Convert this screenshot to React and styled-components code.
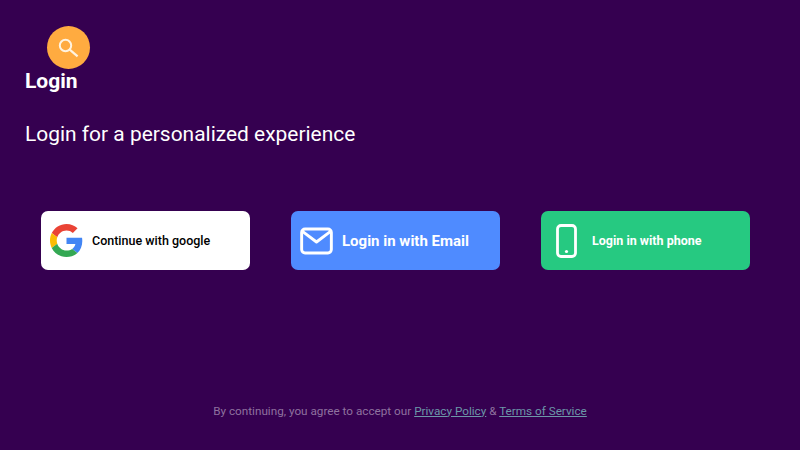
import React from "react";
import styled, { createGlobalStyle } from "styled-components";

const Global = createGlobalStyle`
  html, body { margin: 0; padding: 0; background: #350050; }
  body { font-family: Roboto, "Liberation Sans", sans-serif; }
  #root { width: 800px; height: 450px; overflow: hidden; }
`;

const Page = styled.main`
  width: 800px;
  height: 450px;
  box-sizing: border-box;
  background: #350050;
  color: #fff;
  display: flex;
  flex-direction: column;
  padding: 26px 0 0 0;
`;

const Header = styled.header`
  display: flex;
  flex-direction: column;
  align-items: flex-start;
  padding-left: 25px;
`;

const SearchBadge = styled.div`
  width: 43px;
  height: 43px;
  margin-left: 22px;
  border-radius: 50%;
  background: #ffab40;
  display: flex;
  align-items: center;
  justify-content: center;
`;

const Title = styled.h1`
  margin: 0;
  font-size: 21px;
  line-height: 24px;
  font-weight: 700;
  color: #fff;
`;

const Subtitle = styled.p`
  margin: 28px 0 0;
  font-size: 20.94px;
  line-height: 26px;
  font-weight: 400;
  color: #fff;
`;

const ButtonRow = styled.div`
  display: grid;
  grid-template-columns: repeat(3, 209px);
  column-gap: 41px;
  padding-left: 41px;
  margin-top: 64px;
`;

const LoginButton = styled.button`
  height: 59px;
  box-sizing: border-box;
  border: 0;
  border-radius: 7px;
  padding: 0 0 0 9px;
  background: ${(p) => p.$bg};
  color: ${(p) => p.$fg};
  font-family: inherit;
  font-size: ${(p) => p.$size}px;
  font-weight: ${(p) => p.$weight};
  display: flex;
  align-items: center;
  text-align: left;
`;

const IconSlot = styled.span`
  width: 33px;
  height: 33px;
  flex: none;
  margin-right: 9px;
  display: flex;
  align-items: center;
  justify-content: center;
`;

const Footer = styled.footer`
  margin-top: 133.5px;
  text-align: center;
  font-size: 11.72px;
  line-height: 14px;
  color: #8f729f;
`;

const FooterLink = styled.a`
  color: #6c97a8;
  text-decoration: underline;
`;

const GoogleIcon = () => (
  <svg width="33" height="33" viewBox="0 0 48 48">
    <path fill="#EA4335" d="M24 9.5c3.54 0 6.71 1.22 9.21 3.6l6.85-6.85C35.9 2.38 30.47 0 24 0 14.62 0 6.51 5.38 2.56 13.22l7.98 6.19C12.43 13.72 17.74 9.5 24 9.5z" />
    <path fill="#4285F4" d="M46.98 24.55c0-1.57-.15-3.09-.38-4.55H24v9.02h12.94c-.58 2.96-2.26 5.48-4.78 7.18l7.73 6c4.51-4.18 7.09-10.36 7.09-17.65z" />
    <path fill="#FBBC05" d="M10.53 28.59c-.48-1.45-.76-2.99-.76-4.59s.27-3.14.76-4.59l-7.98-6.19C.92 16.46 0 20.12 0 24c0 3.88.92 7.54 2.56 10.78l7.97-6.19z" />
    <path fill="#34A853" d="M24 48c6.48 0 11.93-2.13 15.89-5.81l-7.73-6c-2.15 1.45-4.92 2.3-8.16 2.3-6.26 0-11.57-4.22-13.47-9.91l-7.98 6.19C6.51 42.62 14.62 48 24 48z" />
  </svg>
);

const MailIcon = () => (
  <svg width="34" height="28" viewBox="0 0 34 28" fill="none" stroke="#fff" strokeWidth="3">
    <rect x="1.7" y="1.7" width="30.6" height="24.6" rx="3.5" />
    <path d="M2.5 4 L17 15 L31.5 4" strokeLinejoin="round" />
  </svg>
);

const PhoneIcon = () => (
  <svg width="21" height="34" viewBox="0 0 21 34" fill="none" stroke="#fff" strokeWidth="2.8">
    <rect x="1.5" y="1.5" width="18" height="31" rx="3.5" />
    <circle cx="10.5" cy="27.5" r="1.6" fill="#fff" stroke="none" />
  </svg>
);

const SearchIcon = () => (
  <svg width="24" height="24" viewBox="0 0 24 24" fill="none" stroke="#fff3e0" strokeWidth="2">
    <circle cx="8.5" cy="9.5" r="5.7" />
    <path d="M12.7 13.6 L20.6 20.4" strokeWidth="2.2" />
  </svg>
);

export default function App() {
  return (
    <>
      <Global />
      <Page>
        <Header>
          <SearchBadge>
            <SearchIcon />
          </SearchBadge>
          <Title>Login</Title>
          <Subtitle>Login for a personalized experience</Subtitle>
        </Header>
        <ButtonRow>
          <LoginButton $bg="#ffffff" $fg="#000000" $size={12.5} $weight={500}>
            <IconSlot><GoogleIcon /></IconSlot>
            Continue with google
          </LoginButton>
          <LoginButton $bg="#4f8bff" $fg="#ffffff" $size={15} $weight={700}>
            <IconSlot><MailIcon /></IconSlot>
            Login in with Email
          </LoginButton>
          <LoginButton $bg="#26c981" $fg="#ffffff" $size={12.5} $weight={700}>
            <IconSlot><PhoneIcon /></IconSlot>
            Login in with phone
          </LoginButton>
        </ButtonRow>
        <Footer>
          By continuing, you agree to accept our <FooterLink>Privacy Policy</FooterLink> &amp; <FooterLink>Terms of Service</FooterLink>
        </Footer>
      </Page>
    </>
  );
}
